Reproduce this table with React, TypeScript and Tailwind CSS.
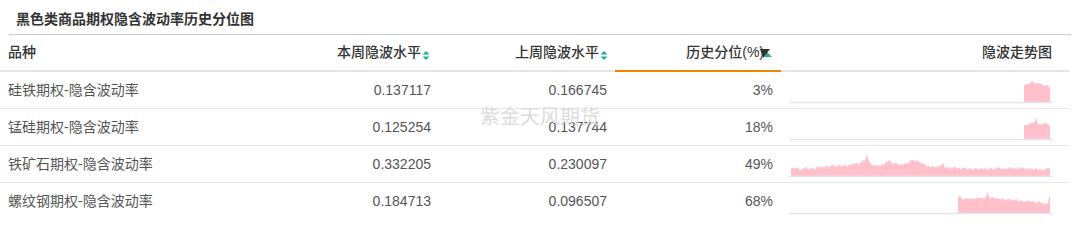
import React from "react";

type Anchor = [number, number];

function rng(seed: number) {
  let s = seed;
  return () => {
    s = (s * 9301 + 49297) % 233280;
    return s / 233280;
  };
}

function buildPath(anchors: Anchor[], seed: number, noise: number, base = 24) {
  const r = rng(seed);
  const start = anchors[0][0];
  const end = anchors[anchors.length - 1][0];
  const pts: string[] = [`M${start} ${base}`];
  for (let x = start; x <= end; x += 1) {
    let i = 0;
    while (i < anchors.length - 2 && anchors[i + 1][0] < x) i++;
    const [x0, h0] = anchors[i];
    const [x1, h1] = anchors[i + 1];
    const t = x1 === x0 ? 0 : (x - x0) / (x1 - x0);
    let h = h0 + (h1 - h0) * Math.min(Math.max(t, 0), 1);
    h += (r() - 0.5) * noise;
    pts.push(`L${x} ${(base - h).toFixed(1)}`);
  }
  pts.push(`L${end} ${base} Z`);
  return pts.join(" ");
}

const rows = [
  {
    name: "硅铁期权-隐含波动率",
    cur: "0.137117",
    prev: "0.166745",
    pct: "3%",
    anchors: [
      [235, 17],
      [239, 18],
      [242, 19],
      [243, 22],
      [245, 18],
      [250, 19],
      [253, 17],
      [256, 17],
      [261, 15],
    ] as Anchor[],
    seed: 3,
    noise: 2,
  },
  {
    name: "锰硅期权-隐含波动率",
    cur: "0.125254",
    prev: "0.137744",
    pct: "18%",
    anchors: [
      [235, 13],
      [239, 15],
      [243, 16],
      [246, 17],
      [247, 21],
      [249, 15],
      [254, 15],
      [256, 17],
      [261, 13],
    ] as Anchor[],
    seed: 11,
    noise: 2,
  },
  {
    name: "铁矿石期权-隐含波动率",
    cur: "0.332205",
    prev: "0.230097",
    pct: "49%",
    anchors: [
      [2, 7],
      [24, 8],
      [26, 6],
      [28, 9],
      [40, 10],
      [60, 11],
      [72, 13],
      [76, 16],
      [78, 21],
      [80, 14],
      [84, 10],
      [95, 11],
      [99, 16],
      [104, 12],
      [112, 11],
      [122, 15],
      [128, 15],
      [134, 12],
      [140, 9],
      [152, 10],
      [154, 13],
      [156, 9],
      [175, 7],
      [195, 7],
      [210, 8],
      [225, 8],
      [245, 7],
      [255, 6],
      [261, 8],
    ] as Anchor[],
    seed: 29,
    noise: 3,
  },
  {
    name: "螺纹钢期权-隐含波动率",
    cur: "0.184713",
    prev: "0.096507",
    pct: "68%",
    anchors: [
      [169, 16],
      [172, 15],
      [178, 14],
      [190, 15],
      [197, 15],
      [198, 21],
      [200, 16],
      [210, 14],
      [225, 13],
      [235, 12],
      [245, 12],
      [256, 9],
      [259, 10],
      [260, 16],
      [261, 16],
    ] as Anchor[],
    seed: 47,
    noise: 2.5,
  },
];

function Spark({ anchors, seed, noise }: { anchors: Anchor[]; seed: number; noise: number }) {
  const d = buildPath(anchors, seed, noise);
  return (
    <svg width="264" height="26" viewBox="0 0 264 26" className="block">
      <path d={d} fill="#ffc0cb" />
      <line x1="0" y1="24.5" x2="264" y2="24.5" stroke="#e0e6f1" strokeWidth="1.5" />
    </svg>
  );
}

function SortIcon() {
  return (
    <svg width="8" height="11" viewBox="0 0 8 11" className="ml-[1px] mt-[6px]">
      <path d="M4 1 L7.5 4.5 L0.5 4.5 Z" fill="#1fae96" />
      <path d="M0.5 6.5 L7.5 6.5 L4 10 Z" fill="#1fae96" />
    </svg>
  );
}

function ActiveSortIcon() {
  return (
    <svg width="16" height="12" viewBox="0 0 16 12" className="-ml-[5px] mt-[2px]">
      <path d="M8 4 L13 9 L5 9 Z" fill="#1fae96" />
      <path d="M1 1 L11 1 L4 10 Z" fill="#333333" />
    </svg>
  );
}

export default function App() {
  const font = { fontFamily: '"Liberation Sans", "Noto Sans CJK SC", sans-serif' };
  return (
    <div className="relative w-[1080px] h-[247px] bg-white overflow-hidden text-[14px]" style={font}>
      <div className="mx-[9px] h-[35px] border-b border-[#cccccc] pl-[7px] flex items-center">
        <span
          className="text-[14px] font-bold text-[#333333] pt-[2px]"
          style={{ fontFamily: '"Noto Sans CJK SC", sans-serif' }}
        >
          黑色类商品期权隐含波动率历史分位图
        </span>
      </div>
      <div className="w-[1069px]">
        <div className="grid grid-cols-[263px_176px_176px_166px_288px] h-[37px] text-[#333333] font-medium">
          <div className="border-b-2 border-[#e6e6e6] pl-[8px] flex items-center">品种</div>
          <div className="border-b-2 border-[#e6e6e6] pr-[9px] flex items-center justify-end">
            本周隐波水平
            <SortIcon />
          </div>
          <div className="border-b-2 border-[#e6e6e6] pr-[7px] flex items-center justify-end">
            上周隐波水平
            <SortIcon />
          </div>
          <div className="border-b-2 border-[#f08300] pr-[6px] flex items-center justify-end">
            历史分位(%)
            <ActiveSortIcon />
          </div>
          <div className="border-b-2 border-[#e6e6e6] pr-[17px] flex items-center justify-end">隐波走势图</div>
        </div>
        {rows.map((r, i) => (
          <div
            key={r.name}
            className={`grid grid-cols-[263px_176px_176px_166px_288px] h-[37px] text-[#555555] ${
              i < rows.length - 1 ? "border-b border-[#e8e8e8]" : ""
            }`}
          >
            <div className="pl-[8px] flex items-center">{r.name}</div>
            <div className="pr-[8px] flex items-center justify-end">{r.cur}</div>
            <div className="pr-[8px] flex items-center justify-end">{r.prev}</div>
            <div className="pr-[8px] flex items-center justify-end">{r.pct}</div>
            <div className="pl-[8px] pt-[6px]">
              <Spark anchors={r.anchors} seed={r.seed} noise={r.noise} />
            </div>
          </div>
        ))}
      </div>
      <div
        className="absolute left-[480px] top-[104px] text-[20px] leading-[24px] text-[#dcdcdc] pointer-events-none"
        style={{ fontFamily: '"Noto Sans CJK SC", sans-serif' }}
      >
        紫金天风期货
      </div>
    </div>
  );
}
